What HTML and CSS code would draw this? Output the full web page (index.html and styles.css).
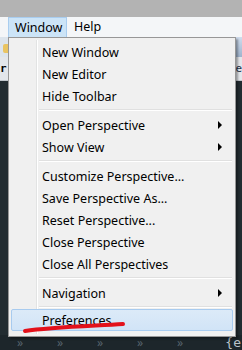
FILE: index.html
```html
<!DOCTYPE html>
<html>
<head>
<meta charset="utf-8">
<link rel="stylesheet" href="styles.css">
</head>
<body>
<div class="titlebar"></div>
<div class="menubar">
  <div class="mb-item active">Window</div>
  <div class="mb-item">Help</div>
</div>
<div class="workspace">
  <div class="toolbar">
    <div class="tb-left"><span class="tb-icon"></span></div>
    <div class="tb-right"></div>
  </div>
  <div class="tabrow">
    <span class="tab-l">r:</span>
    <span class="tab-r">e</span>
  </div>
  <div class="editor">
    <div class="bottom-row">
      <span class="chev">»</span>
      <span class="chev">»</span>
      <span class="chev">»</span>
      <span class="chev">»</span>
      <span class="chev">»</span>
      <span class="brace">{e</span>
    </div>
  </div>
</div>

<div class="menu">
  <div class="gutter"></div>
  <div class="item">New Window</div>
  <div class="item">New Editor</div>
  <div class="item">Hide Toolbar</div>
  <div class="sep"></div>
  <div class="item sub">Open Perspective</div>
  <div class="item sub">Show View</div>
  <div class="sep"></div>
  <div class="item">Customize Perspective...</div>
  <div class="item">Save Perspective As...</div>
  <div class="item">Reset Perspective...</div>
  <div class="item">Close Perspective</div>
  <div class="item">Close All Perspectives</div>
  <div class="sep"></div>
  <div class="item sub">Navigation</div>
  <div class="sep"></div>
  <div class="item hot">Preferences</div>
</div>

<svg class="scribble" width="242" height="350" viewBox="0 0 242 350">
  <path d="M25 331 C 50 327, 90 326, 123 324" stroke="#e3111b" stroke-width="4" fill="none" stroke-linecap="round"/>
</svg>
</body>
</html>
```

FILE: styles.css
```css
html, body {
  margin: 0;
  padding: 0;
}
body {
  width: 242px;
  height: 350px;
  overflow: hidden;
  background: #1f292f;
  font-family: "Noto Sans", "Open Sans", sans-serif;
  font-size: 12px;
  color: #000;
  position: relative;
}
.titlebar {
  height: 17px;
  background: #b3b3b3;
}
.menubar {
  height: 20px;
  background: #f4f6f8;
  display: flex;
  padding-left: 8px;
  box-sizing: border-box;
}
.mb-item {
  height: 20px;
  line-height: 20px;
  padding: 0 7px 0 6px;
  box-sizing: border-box;
  font-size: 12.5px;
}
.mb-item.active {
  background: #cce4f7;
  border: 1px solid #a9cdef;
  border-bottom: none;
  line-height: 19px;
  width: 59px;
}
.mb-item + .mb-item {
  padding-left: 7px;
}
.workspace {
  display: flex;
  flex-direction: column;
  height: 313px;
}
.toolbar {
  height: 20px;
  display: flex;
  background: #f2f4f6;
}
.tb-left {
  width: 8px;
  background: #dce4ec;
  position: relative;
}
.tb-icon {
  display: block;
  position: absolute;
  left: 3px;
  top: 7px;
  width: 5px;
  height: 9px;
  background: #e9c462;
  border-radius: 2px 0 0 2px;
}
.tb-right {
  flex: 1;
  background: linear-gradient(#cfdced, #9fb3cc);
}
.tabrow {
  height: 23px;
  background: #e3e6ea;
  display: flex;
  justify-content: space-between;
  align-items: center;
  font-family: "DejaVu Sans Mono", monospace;
  font-weight: bold;
  font-size: 11px;
  border-bottom: 1px solid #c0c6cc;
}
.tab-l {
  margin-left: 0;
}
.tab-r {
  font-weight: normal;
  color: #20314a;
  margin-right: 0;
}
.editor {
  flex: 1;
  background: #222c31;
  display: flex;
  flex-direction: column;
  justify-content: flex-end;
}
.bottom-row {
  height: 14px;
  display: flex;
  align-items: center;
  padding-bottom: 1px;
  background: #1d262b;
}
.chev {
  color: #56636c;
  font-size: 12px;
  width: 40px;
  padding-left: 17px;
  box-sizing: border-box;
}
.brace {
  margin-left: auto;
  color: #b9c2c9;
  font-family: "DejaVu Sans Mono", monospace;
  font-size: 13px;
  margin-right: 1px;
}
.menu {
  position: absolute;
  left: 8px;
  top: 37px;
  width: 228px;
  height: 300px;
  box-sizing: border-box;
  background: #f0f0f0;
  border: 1px solid #979797;
  padding: 2px 2px;
  box-shadow: 2px 2px 2px rgba(0,0,0,0.35);
}
.gutter {
  position: absolute;
  left: 27px;
  top: 2px;
  bottom: 2px;
  width: 1px;
  background: #e2e3e3;
  border-right: 1px solid #ffffff;
}
.item {
  position: relative;
  height: 22px;
  line-height: 22px;
  padding-left: 31px;
  padding-top: 2px;
  box-sizing: border-box;
  font-size: 12.5px;
  white-space: nowrap;
}
.item.sub::after {
  content: "";
  position: absolute;
  right: 11px;
  top: 8px;
  border-left: 4px solid #000;
  border-top: 4px solid transparent;
  border-bottom: 4px solid transparent;
}
.sep {
  height: 7px;
  margin-left: 28px;
  position: relative;
}
.sep::before {
  content: "";
  position: absolute;
  left: 0;
  right: 1px;
  top: 3px;
  height: 1px;
  background: #e0e0e0;
  border-bottom: 1px solid #fff;
}
.item.hot {
  background: linear-gradient(#dceaf8, #d1e4f7);
  border: 1px solid #a8cbef;
  border-radius: 2px;
  height: 22px;
  line-height: 20px;
  padding-top: 1px;
  padding-left: 30px;
  margin-top: -1px;
}
.scribble {
  position: absolute;
  left: 0;
  top: 0;
  pointer-events: none;
}
```
